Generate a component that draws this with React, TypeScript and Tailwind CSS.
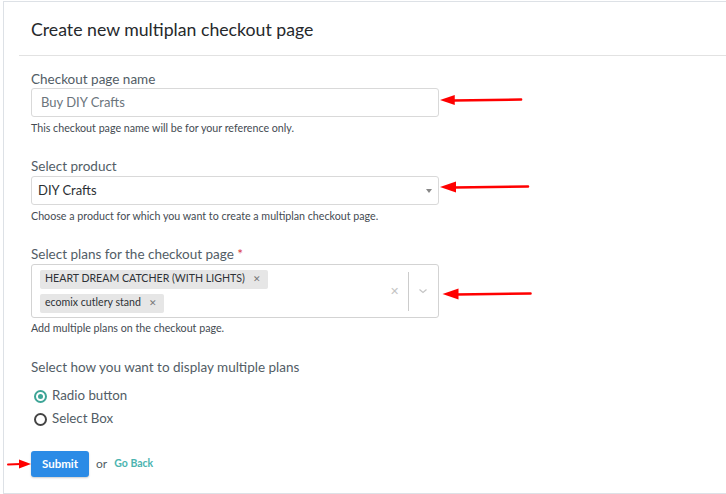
const Arrow = ({ className }: { className: string }) => (
  <svg className={className} viewBox="0 0 90 12" fill="none">
    <path d="M14 6.5 L88 5.5" stroke="#f00" strokeWidth="2.6" strokeLinecap="round" />
    <path d="M0 6 L16 0.5 L16 11.5 Z" fill="#f00" />
  </svg>
);

const App = () => {
  const plans = ['HEART DREAM CATCHER (WITH LIGHTS)', 'ecomix cutlery stand'];

  return (
    <div className="relative h-[494px] w-[726px] overflow-hidden bg-white font-['Lato',sans-serif] text-[#525d66]">
      <div className="ml-[3px] mt-[1px] h-[493px] border-y border-l border-[#dde1e6] bg-white">
        <div className="ml-[15px] flex h-[54px] items-center border-b border-[#e2e2e2] pl-3 pt-[3px]">
          <h1 className="text-[17.7px] text-[#26292c]">Create new multiplan checkout page</h1>
        </div>

        <div className="pl-[27px] pt-[14px]">
          <div className="flex flex-col">
            <label className="text-[13.5px] leading-[18px]">Checkout page name</label>
            <div className="flex h-[29px] w-[408px] items-center rounded-[3px] border border-[#d9d9d9] px-[9px] text-[13px] text-[#6b747c]">
              Buy DIY Crafts
            </div>
            <p className="mt-[4px] text-[10.7px] leading-[14px] text-[#444b52]">
              This checkout page name will be for your reference only.
            </p>
          </div>

          <div className="mt-[22px] flex flex-col">
            <label className="text-[13.5px] leading-[18px]">Select product</label>
            <div className="mt-[1px] flex h-[29px] w-[408px] items-center justify-between rounded-[3px] border border-[#d9d9d9] pl-[6px] pr-[5px] text-[13px] text-[#2b2f33]">
              DIY Crafts
              <span className="mr-[1px] h-0 w-0 border-x-[3.5px] border-t-[4px] border-x-transparent border-t-[#888]" />
            </div>
            <p className="mt-[4px] text-[10.7px] leading-[14px] text-[#444b52]">
              Choose a product for which you want to create a multiplan checkout page.
            </p>
          </div>

          <div className="mt-[22px] flex flex-col">
            <label className="text-[13.5px] leading-[18px]">
              Select plans for the checkout page <span className="text-[#d9363e]">*</span>
            </label>
            <div className="mt-[1px] flex h-[54px] w-[408px] items-center rounded-[3px] border border-[#d3d3d3]">
              <div className="flex flex-1 flex-col items-start gap-[5px] pl-2">
                {plans.map((plan) => (
                  <span
                    key={plan}
                    className="flex h-[19px] items-center rounded-[2px] bg-[#e6e6e6] pl-[5px] pr-[7px] text-[10.6px] text-[#2e3236]"
                  >
                    {plan}
                    <span className="ml-[8px] text-[9px] text-[#777]">✕</span>
                  </span>
                ))}
              </div>
              <span className="mr-[9px] text-[11px] text-[#c4c4c4]">✕</span>
              <span className="h-[39px] w-px bg-[#cccccc]" />
              <svg className="ml-[9px] mr-[10px] h-[10px] w-[10px]" viewBox="0 0 10 10" fill="none">
                <path d="M1.5 3.5 L5 6.5 L8.5 3.5" stroke="#c4c4c4" strokeWidth="1.2" />
              </svg>
            </div>
            <p className="mt-[3px] text-[10.7px] leading-[14px] text-[#444b52]">Add multiple plans on the checkout page.</p>
          </div>

          <div className="mt-[23px] flex flex-col">
            <label className="text-[13.5px] leading-[18px]">Select how you want to display multiple plans</label>
            <div className="mt-[11px] flex h-[18px] items-center gap-[5px] pl-[3px] text-[13.3px]">
              <span className="flex h-[13px] w-[13px] items-center justify-center rounded-full border-[2px] border-[#3ea597]">
                <span className="h-[5px] w-[5px] rounded-full bg-[#3ea597]" />
              </span>
              Radio button
            </div>
            <div className="mt-[5px] flex h-[18px] items-center gap-[5px] pl-[3px] text-[13.3px]">
              <span className="h-[13px] w-[13px] rounded-full border-[2px] border-[#444]" />
              Select Box
            </div>
          </div>

          <div className="mt-[23px] flex items-center">
            <button className="h-[26px] rounded-[3px] bg-[#2b8be6] px-[11px] text-[11.5px] font-bold text-white shadow-[0_1px_2px_rgba(0,0,0,0.2)]">
              Submit
            </button>
            <span className="ml-[7px] text-[12px] text-[#525d66]">or</span>
            <a className="ml-[7px] text-[10.5px] font-bold text-[#4bb4b0]">Go Back</a>
          </div>
        </div>
      </div>

      <Arrow className="absolute left-[440px] top-[94px] h-[12px] w-[83px]" />
      <Arrow className="absolute left-[440px] top-[181px] h-[12px] w-[90px]" />
      <Arrow className="absolute left-[440px] top-[288px] h-[12px] w-[95px]" />
      <svg className="absolute left-[7px] top-[459px] h-[10px] w-[24px]" viewBox="0 0 24 10" fill="none">
        <path d="M1 5.5 L14 5" stroke="#f00" strokeWidth="2" strokeLinecap="round" />
        <path d="M24 5 L12 0.5 L12 9.5 Z" fill="#f00" />
      </svg>
    </div>
  );
};

export default App;
